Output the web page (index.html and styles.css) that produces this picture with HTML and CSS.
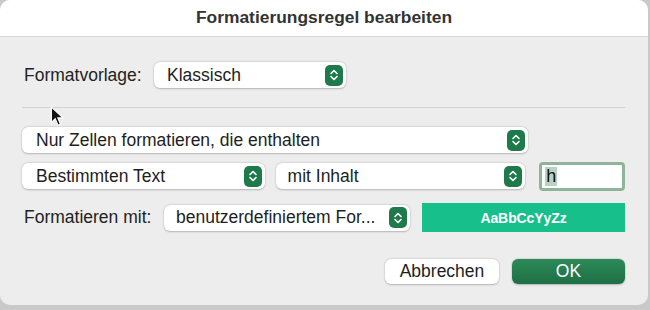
FILE: index.html
```html
<!DOCTYPE html>
<html lang="de">
<head>
<meta charset="utf-8">
<link rel="stylesheet" href="styles.css">
</head>
<body>
<div class="dialog">
  <div class="titlebar">Formatierungsregel bearbeiten</div>
  <div class="content">
    <div class="row row-style">
      <span class="label">Formatvorlage:</span>
      <div class="popup w-style"><span>Klassisch</span><span class="stepper"><svg width="10" height="14" viewBox="0 0 10 14"><path d="M2 5.5 L5 2.5 L8 5.5 M2 8.5 L5 11.5 L8 8.5" fill="none" stroke="#fff" stroke-width="1.6" stroke-linecap="round" stroke-linejoin="round"/></svg></span></div>
    </div>
    <div class="sep"></div>
    <div class="row row-type">
      <div class="popup w-type"><span>Nur Zellen formatieren, die enthalten</span><span class="stepper"><svg width="10" height="14" viewBox="0 0 10 14"><path d="M2 5.5 L5 2.5 L8 5.5 M2 8.5 L5 11.5 L8 8.5" fill="none" stroke="#fff" stroke-width="1.6" stroke-linecap="round" stroke-linejoin="round"/></svg></span></div>
    </div>
    <div class="row row-cond">
      <div class="popup w-cond1"><span>Bestimmten Text</span><span class="stepper"><svg width="10" height="14" viewBox="0 0 10 14"><path d="M2 5.5 L5 2.5 L8 5.5 M2 8.5 L5 11.5 L8 8.5" fill="none" stroke="#fff" stroke-width="1.6" stroke-linecap="round" stroke-linejoin="round"/></svg></span></div>
      <div class="popup w-cond2"><span>mit Inhalt</span><span class="stepper"><svg width="10" height="14" viewBox="0 0 10 14"><path d="M2 5.5 L5 2.5 L8 5.5 M2 8.5 L5 11.5 L8 8.5" fill="none" stroke="#fff" stroke-width="1.6" stroke-linecap="round" stroke-linejoin="round"/></svg></span></div>
      <div class="field"><span class="sel">h</span></div>
    </div>
    <div class="row row-format">
      <span class="label">Formatieren mit:</span>
      <div class="popup w-format"><span>benutzerdefiniertem For...</span><span class="stepper"><svg width="10" height="14" viewBox="0 0 10 14"><path d="M2 5.5 L5 2.5 L8 5.5 M2 8.5 L5 11.5 L8 8.5" fill="none" stroke="#fff" stroke-width="1.6" stroke-linecap="round" stroke-linejoin="round"/></svg></span></div>
      <div class="preview">AaBbCcYyZz</div>
    </div>
    <div class="buttons">
      <div class="btn">Abbrechen</div>
      <div class="btn primary">OK</div>
    </div>
  </div>
  <div class="cursor"><svg width="16" height="22" viewBox="0 0 14 20"><path d="M1 1 L1 15 L4.5 11.5 L7 17.5 L9.2 16.6 L6.8 10.8 L11.5 10.8 Z" fill="#111" stroke="#fff" stroke-width="1"/></svg></div>
</div>
</body>
</html>
```
FILE: styles.css
```css
* { box-sizing: border-box; }
html, body {
  margin: 0;
  padding: 0;
  width: 650px;
  height: 310px;
  background: #c9c9c9;
  overflow: hidden;
  font-family: "Liberation Sans", Arial, sans-serif;
  color: #222;
}
.dialog {
  position: relative;
  width: 648px;
  height: 305px;
  background: #ededed;
  border-radius: 10px;
  overflow: hidden;
}
.titlebar {
  height: 37px;
  background: #fff;
  border-bottom: 1px solid #d9d9d9;
  text-align: center;
  font-weight: bold;
  font-size: 17.4px;
  line-height: 35px;
  color: #333;
}
.content {
  padding: 0 23px 0 22px;
  display: flex;
  flex-direction: column;
}
.row {
  display: flex;
  align-items: center;
}
.label {
  font-size: 17.5px;
  color: #222;
  padding-left: 2px;
}
.row-style { margin-top: 25px; height: 26px; }
.row-style .label { width: 132px; }
.sep {
  margin-top: 19px;
  height: 1px;
  background: #d2d2d2;
  width: 603px;
}
.row-type { margin-top: 19px; height: 26px; }
.row-cond { margin-top: 9px; height: 28px; gap: 11px; }
.row-format { margin-top: 13px; height: 29px; }
.row-format .label { width: 142px; }
.popup {
  height: 26px;
  background: #fff;
  border-radius: 6px;
  box-shadow: 0 0.5px 2px rgba(0,0,0,0.22), 0 0 0 0.5px rgba(0,0,0,0.06);
  display: flex;
  align-items: center;
  justify-content: space-between;
  padding: 0 3px 0 14px;
  font-size: 17.5px;
  color: #1e1e1e;
  white-space: nowrap;
}
.w-style { width: 192px; padding-left: 13px; }
.w-type { width: 506px; }
.w-cond1 { width: 243px; }
.w-cond2 { width: 250px; padding-left: 12px; }
.w-format { width: 246px; padding-left: 12px; }
.stepper {
  flex: none;
  width: 18px;
  height: 21px;
  background: #1f7a4b;
  border-radius: 5px;
  display: flex;
  align-items: center;
  justify-content: center;
}
.field {
  margin-left: 3px;
  width: 86px;
  height: 29px;
  border: 3px solid #8fb49a;
  border-radius: 4px;
  background: #fff;
  display: flex;
  align-items: center;
  padding-left: 3px;
  font-size: 18px;
}
.sel {
  background: #b9d3bf;
  color: #111;
  line-height: 19px;
  padding: 0 1px;
}
.preview {
  margin-left: 12px;
  width: 203px;
  height: 29px;
  background: #17c08a;
  color: #fff;
  font-size: 14px;
  font-weight: bold;
  display: flex;
  align-items: center;
  justify-content: center;
  letter-spacing: -0.1px;
}
.buttons {
  margin-top: 27px;
  display: flex;
  justify-content: flex-end;
  gap: 13px;
}
.btn {
  height: 25px;
  width: 114px;
  background: #fff;
  border-radius: 6px;
  box-shadow: 0 0.5px 2px rgba(0,0,0,0.22), 0 0 0 0.5px rgba(0,0,0,0.06);
  font-size: 17.5px;
  display: flex;
  align-items: center;
  justify-content: center;
  color: #1e1e1e;
}
.btn.primary {
  width: 113px;
  background: linear-gradient(#2c8a58, #1e6f44);
  color: #fff;
}
.cursor {
  position: absolute;
  left: 50px;
  top: 106px;
}
```
